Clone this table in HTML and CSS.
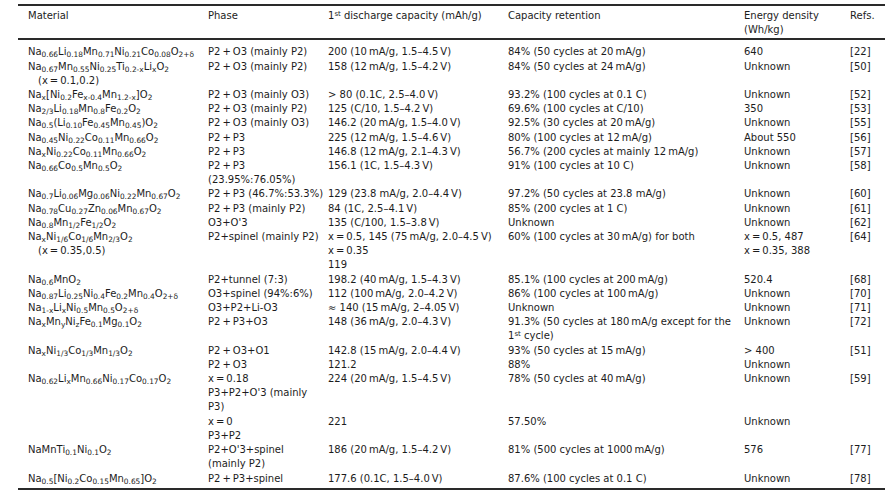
FILE: index.html
```html
<!DOCTYPE html>
<html lang="en">
<head>
<meta charset="utf-8">
<title>Table</title>
<link rel="stylesheet" href="styles.css">
</head>
<body>
<div class="page">
<table class="tbl">
<colgroup><col class="c-mat"><col class="c-phase"><col class="c-cap"><col class="c-ret"><col class="c-en"><col class="c-ref"></colgroup>
<thead>
<tr><th class="mat">Material</th><th>Phase</th><th>1<sup>st</sup> discharge capacity (mAh/g)</th><th>Capacity retention</th><th>Energy density<br>(Wh/kg)</th><th>Refs.</th></tr>
</thead>
<tbody>
<tr class="first"><td class="mat">Na<sub>0.66</sub>Li<sub>0.18</sub>Mn<sub>0.71</sub>Ni<sub>0.21</sub>Co<sub>0.08</sub>O<sub>2+δ</sub></td><td>P2&#8201;+&#8201;O3 (mainly P2)</td><td>200 (10&#8201;mA/g, 1.5–4.5&#8201;V)</td><td>84% (50 cycles at 20&#8201;mA/g)</td><td>640</td><td>[22]</td></tr>
<tr><td class="mat">Na<sub>0.67</sub>Mn<sub>0.55</sub>Ni<sub>0.25</sub>Ti<sub>0.2-x</sub>Li<sub>x</sub>O<sub>2</sub><br><span class="ind">(x&#8201;=&#8201;0.1,0.2)</span></td><td>P2&#8201;+&#8201;O3 (mainly P2)</td><td>158 (12&#8201;mA/g, 1.5–4.2&#8201;V)</td><td>84% (50 cycles at 24&#8201;mA/g)</td><td>Unknown</td><td>[50]</td></tr>
<tr><td class="mat">Na<sub>x</sub>[Ni<sub>0.2</sub>Fe<sub>x-0.4</sub>Mn<sub>1.2-x</sub>]O<sub>2</sub></td><td>P2&#8201;+&#8201;O3 (mainly O3)</td><td>&gt; 80 (0.1C, 2.5–4.0&#8201;V)</td><td>93.2% (100 cycles at 0.1 C)</td><td>Unknown</td><td>[52]</td></tr>
<tr><td class="mat">Na<sub>2/3</sub>Li<sub>0.18</sub>Mn<sub>0.8</sub>Fe<sub>0.2</sub>O<sub>2</sub></td><td>P2&#8201;+&#8201;O3 (mainly P2)</td><td>125 (C/10, 1.5–4.2&#8201;V)</td><td>69.6% (100 cycles at C/10)</td><td>350</td><td>[53]</td></tr>
<tr><td class="mat">Na<sub>0.5</sub>(Li<sub>0.10</sub>Fe<sub>0.45</sub>Mn<sub>0.45</sub>)O<sub>2</sub></td><td>P2&#8201;+&#8201;O3 (mainly O3)</td><td>146.2 (20&#8201;mA/g, 1.5–4.0&#8201;V)</td><td>92.5% (30 cycles at 20&#8201;mA/g)</td><td>Unknown</td><td>[55]</td></tr>
<tr><td class="mat">Na<sub>0.45</sub>Ni<sub>0.22</sub>Co<sub>0.11</sub>Mn<sub>0.66</sub>O<sub>2</sub></td><td>P2&#8201;+&#8201;P3</td><td>225 (12&#8201;mA/g, 1.5–4.6&#8201;V)</td><td>80% (100 cycles at 12&#8201;mA/g)</td><td>About 550</td><td>[56]</td></tr>
<tr><td class="mat">Na<sub>x</sub>Ni<sub>0.22</sub>Co<sub>0.11</sub>Mn<sub>0.66</sub>O<sub>2</sub></td><td>P2&#8201;+&#8201;P3</td><td>146.8 (12&#8201;mA/g, 2.1–4.3&#8201;V)</td><td>56.7% (200 cycles at mainly 12&#8201;mA/g)</td><td>Unknown</td><td>[57]</td></tr>
<tr><td class="mat">Na<sub>0.66</sub>Co<sub>0.5</sub>Mn<sub>0.5</sub>O<sub>2</sub></td><td>P2&#8201;+&#8201;P3<br>(23.95%:76.05%)</td><td>156.1 (1C, 1.5–4.3&#8201;V)</td><td>91% (100 cycles at 10 C)</td><td>Unknown</td><td>[58]</td></tr>
<tr><td class="mat">Na<sub>0.7</sub>Li<sub>0.06</sub>Mg<sub>0.06</sub>Ni<sub>0.22</sub>Mn<sub>0.67</sub>O<sub>2</sub></td><td>P2&#8201;+&#8201;P3 (46.7%:53.3%)</td><td>129 (23.8 mA/g, 2.0–4.4&#8201;V)</td><td>97.2% (50 cycles at 23.8 mA/g)</td><td>Unknown</td><td>[60]</td></tr>
<tr><td class="mat">Na<sub>0.78</sub>Cu<sub>0.27</sub>Zn<sub>0.06</sub>Mn<sub>0.67</sub>O<sub>2</sub></td><td>P2&#8201;+&#8201;P3 (mainly P2)</td><td>84 (1C, 2.5–4.1&#8201;V)</td><td>85% (200 cycles at 1 C)</td><td>Unknown</td><td>[61]</td></tr>
<tr><td class="mat">Na<sub>0.8</sub>Mn<sub>1/2</sub>Fe<sub>1/2</sub>O<sub>2</sub></td><td>O3+O'3</td><td>135 (C/100, 1.5–3.8&#8201;V)</td><td>Unknown</td><td>Unknown</td><td>[62]</td></tr>
<tr><td class="mat">Na<sub>x</sub>Ni<sub>1/6</sub>Co<sub>1/6</sub>Mn<sub>2/3</sub>O<sub>2</sub><br><span class="ind">(x&#8201;=&#8201;0.35,0.5)</span></td><td>P2+spinel (mainly P2)</td><td>x&#8201;=&#8201;0.5, 145 (75&#8201;mA/g, 2.0–4.5&#8201;V)<br>x&#8201;=&#8201;0.35<br>119</td><td>60% (100 cycles at 30&#8201;mA/g) for both</td><td>x&#8201;=&#8201;0.5, 487<br>x&#8201;=&#8201;0.35, 388</td><td>[64]</td></tr>
<tr><td class="mat">Na<sub>0.6</sub>MnO<sub>2</sub></td><td>P2+tunnel (7:3)</td><td>198.2 (40&#8201;mA/g, 1.5–4.3&#8201;V)</td><td>85.1% (100 cycles at 200&#8201;mA/g)</td><td>520.4</td><td>[68]</td></tr>
<tr><td class="mat">Na<sub>0.87</sub>Li<sub>0.25</sub>Ni<sub>0.4</sub>Fe<sub>0.2</sub>Mn<sub>0.4</sub>O<sub>2+δ</sub></td><td>O3+spinel (94%:6%)</td><td>112 (100&#8201;mA/g, 2.0–4.2&#8201;V)</td><td>86% (100 cycles at 100&#8201;mA/g)</td><td>Unknown</td><td>[70]</td></tr>
<tr><td class="mat">Na<sub>1-x</sub>Li<sub>x</sub>Ni<sub>0.5</sub>Mn<sub>0.5</sub>O<sub>2+δ</sub></td><td>O3+P2+Li-O3</td><td>≈ 140 (15&#8201;mA/g, 2–4.05&#8201;V)</td><td>Unknown</td><td>Unknown</td><td>[71]</td></tr>
<tr><td class="mat">Na<sub>x</sub>Mn<sub>y</sub>Ni<sub>z</sub>Fe<sub>0.1</sub>Mg<sub>0.1</sub>O<sub>2</sub></td><td>P2&#8201;+&#8201;P3+O3</td><td>148 (36&#8201;mA/g, 2.0–4.3&#8201;V)</td><td>91.3% (50 cycles at 180&#8201;mA/g except for the<br>1<sup>st</sup> cycle)</td><td>Unknown</td><td>[72]</td></tr>
<tr><td class="mat">Na<sub>x</sub>Ni<sub>1/3</sub>Co<sub>1/3</sub>Mn<sub>1/3</sub>O<sub>2</sub></td><td>P2&#8201;+&#8201;O3+O1<br>P2&#8201;+&#8201;O3</td><td>142.8 (15&#8201;mA/g, 2.0–4.4&#8201;V)<br>121.2</td><td>93% (50 cycles at 15&#8201;mA/g)<br>88%</td><td>&gt; 400<br>Unknown</td><td>[51]</td></tr>
<tr><td class="mat">Na<sub>0.62</sub>Li<sub>x</sub>Mn<sub>0.66</sub>Ni<sub>0.17</sub>Co<sub>0.17</sub>O<sub>2</sub></td><td>x&#8201;=&#8201;0.18<br>P3+P2+O'3 (mainly<br>P3)<br>x&#8201;=&#8201;0<br>P3+P2</td><td>224 (20&#8201;mA/g, 1.5–4.5&#8201;V)<br><br><br>221</td><td>78% (50 cycles at 40&#8201;mA/g)<br><br><br>57.50%</td><td>Unknown<br><br><br>Unknown</td><td>[59]</td></tr>
<tr><td class="mat">NaMnTi<sub>0.1</sub>Ni<sub>0.1</sub>O<sub>2</sub></td><td>P2+O'3+spinel<br>(mainly P2)</td><td>186 (20&#8201;mA/g, 1.5–4.2&#8201;V)</td><td>81% (500 cycles at 1000&#8201;mA/g)</td><td>576</td><td>[77]</td></tr>
<tr class="last"><td class="mat">Na<sub>0.5</sub>[Ni<sub>0.2</sub>Co<sub>0.15</sub>Mn<sub>0.65</sub>]O<sub>2</sub></td><td>P2&#8201;+&#8201;P3+spinel</td><td>177.6 (0.1C, 1.5–4.0&#8201;V)</td><td>87.6% (100 cycles at 0.1 C)</td><td>Unknown</td><td>[78]</td></tr>
</tbody>
</table>
</div>
</body>
</html>
```

FILE: styles.css
```css
html, body {
  margin: 0;
  padding: 0;
  background: #ffffff;
}
body {
  color: #1c1c1c;
  font-family: "DejaVu Sans", "Open Sans", sans-serif;
  font-size: 10px;
}
.page {
  padding: 4px 5px 0 18px;
}
.tbl {
  width: 867px;
  border-collapse: separate;
  border-spacing: 0;
  table-layout: fixed;
  line-height: 14.2px;
}
.c-mat { width: 190px; }
.c-phase { width: 120px; }
.c-cap { width: 180px; }
.c-ret { width: 236px; }
.c-en { width: 106px; }
.c-ref { width: 35px; }

th {
  font-weight: normal;
  text-align: left;
  vertical-align: top;
  padding: 3px 0 1px 0;
  border-top: 2px solid #2a2a2a;
  border-bottom: 2px solid #2a2a2a;
  white-space: nowrap;
}
td {
  text-align: left;
  vertical-align: top;
  padding: 0;
  white-space: nowrap;
}
th.mat, td.mat {
  padding-left: 10px;
}
tr.first td {
  padding-top: 5px;
}
tr.last td {
  padding-bottom: 2px;
  border-bottom: 2px solid #2a2a2a;
}
.ind {
  padding-left: 10px;
}
sub {
  font-size: 0.74em;
  vertical-align: -0.3em;
  line-height: 0;
}
sup {
  font-size: 0.7em;
  vertical-align: 0.45em;
  line-height: 0;
}
```
